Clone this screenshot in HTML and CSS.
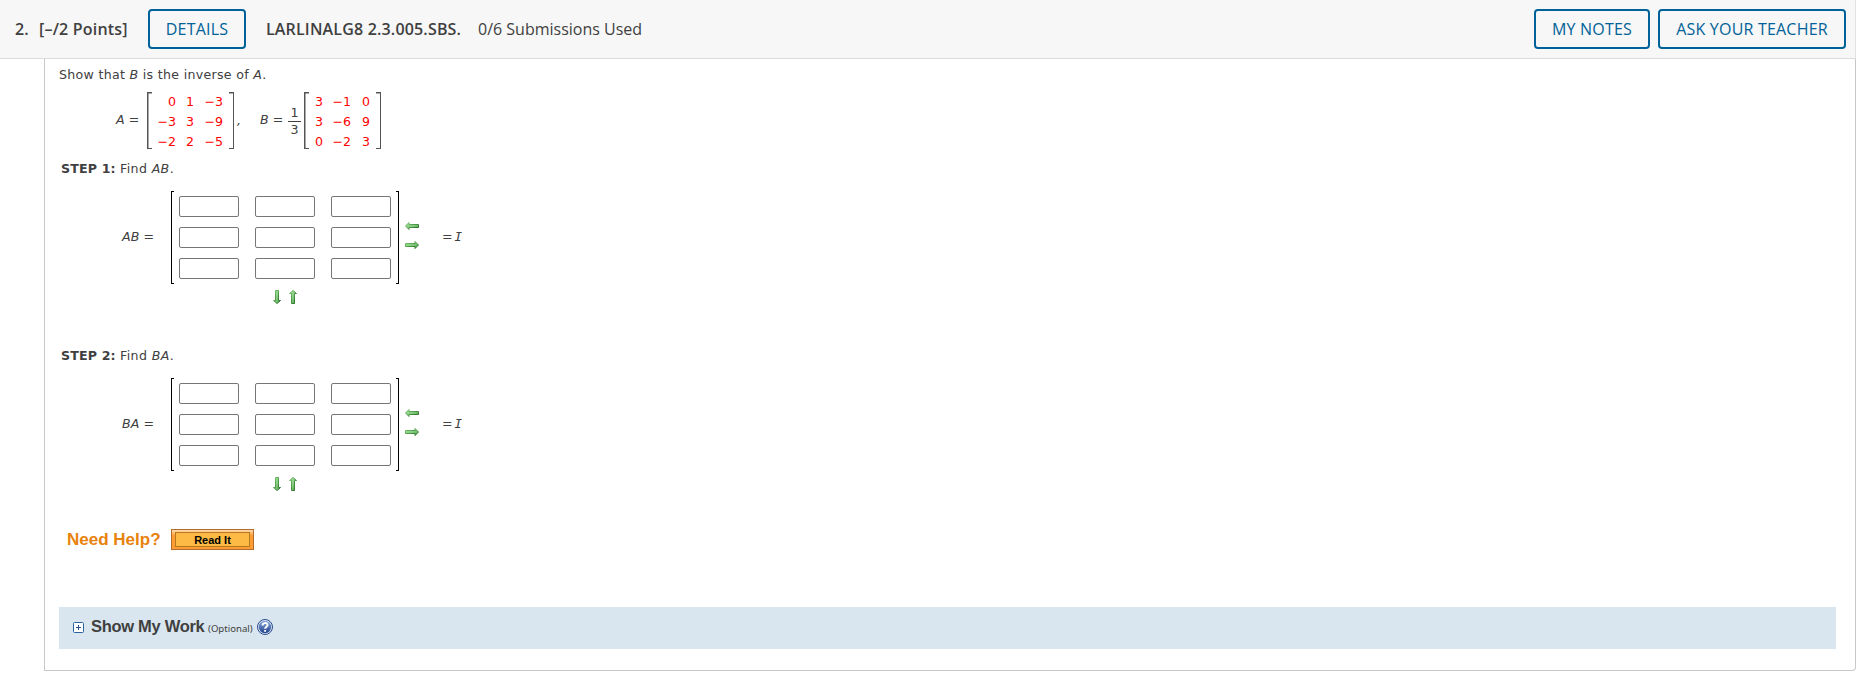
FILE: index.html
```
<!DOCTYPE html>
<html lang="en">
<head>
    <meta charset="UTF-8">
    <meta name="viewport" content="width=device-width, initial-scale=1.0">
    <title>Question 2</title>
    <link rel="stylesheet" href="styles.css">
</head>
<body>
  <!-- gradients shared by the matrix size arrows and the help icon -->
  <svg class="defs" width="0" height="0">
    <defs>
      <linearGradient id="green" x1="0" y1="0" x2="1" y2="1">
        <stop offset="0" stop-color="#a5e29b"/>
        <stop offset="0.5" stop-color="#86cc80"/>
        <stop offset="1" stop-color="#4a984a"/>
      </linearGradient>
      <linearGradient id="edge" x1="0" y1="0" x2="1" y2="1">
        <stop offset="0" stop-color="#7fca77"/>
        <stop offset="1" stop-color="#1c661c"/>
      </linearGradient>
      <linearGradient id="blue" x1="0" y1="0" x2="0" y2="1">
        <stop offset="0" stop-color="#8aa9dc"/>
        <stop offset="1" stop-color="#1f428c"/>
      </linearGradient>
      <symbol id="arrow-left" viewBox="0 0 14 8">
        <path d="M0.5 4 L4 0.5 V2.5 H13.5 V5.5 H4 V7.5 Z" fill="url(#green)" stroke="url(#edge)"/>
      </symbol>
      <symbol id="arrow-right" viewBox="0 0 14 8">
        <path d="M13.5 4 L10 0.5 V2.5 H0.5 V5.5 H10 V7.5 Z" fill="url(#green)" stroke="url(#edge)"/>
      </symbol>
      <symbol id="arrow-down" viewBox="0 0 8 14">
        <path d="M4 13.5 L0.5 10.5 H2.5 V0.5 H5.5 V10.5 H7.5 Z" fill="url(#green)" stroke="url(#edge)"/>
      </symbol>
      <symbol id="arrow-up" viewBox="0 0 8 14">
        <path d="M4 0.5 L0.5 3.5 H2.5 V13.5 H5.5 V3.5 H7.5 Z" fill="url(#green)" stroke="url(#edge)"/>
      </symbol>
    </defs>
  </svg>

  <header>
    <span class="number">2.</span>
    <span class="points">[–/2 Points]</span>
    <button class="btn btn-details">DETAILS</button>
    <span class="code">LARLINALG8 2.3.005.SBS.</span>
    <span class="submissions">0/6 Submissions Used</span>
    <div class="header-right">
      <button class="btn btn-notes">MY NOTES</button>
      <button class="btn btn-ask">ASK YOUR TEACHER</button>
    </div>
  </header>

  <main>
    <p class="prompt">Show that <i>B</i> is the inverse of <i>A</i>.</p>

    <div class="given">
      <span class="name-a"><i>A</i> =</span>
      <div class="matrix matrix-a">
        <span>0</span><span>1</span><span>−3</span>
        <span>−3</span><span>3</span><span>−9</span>
        <span>−2</span><span>2</span><span>−5</span>
      </div>
      <span class="comma"><i>,</i></span>
      <span class="name-b"><i>B</i> =</span>
      <span class="fraction"><span>1</span><span>3</span></span>
      <div class="matrix matrix-b">
        <span>3</span><span>−1</span><span>0</span>
        <span>3</span><span>−6</span><span>9</span>
        <span>0</span><span>−2</span><span>3</span>
      </div>
    </div>

    <section class="step">
      <p class="step-title"><b>STEP 1:</b> <span>Find <i>AB</i>.</span></p>
      <div class="answer">
        <span class="answer-name"><i>AB</i> =</span>
        <div class="answer-matrix">
          <input type="text"><input type="text"><input type="text">
          <input type="text"><input type="text"><input type="text">
          <input type="text"><input type="text"><input type="text">
        </div>
        <div class="cols">
          <svg width="14" height="8"><use href="#arrow-left"/></svg>
          <svg width="14" height="8"><use href="#arrow-right"/></svg>
        </div>
        <span class="identity">= <i>I</i></span>
      </div>
      <div class="rows">
        <svg width="8" height="14"><use href="#arrow-down"/></svg>
        <svg width="8" height="14"><use href="#arrow-up"/></svg>
      </div>
    </section>

    <section class="step">
      <p class="step-title"><b>STEP 2:</b> <span>Find <i>BA</i>.</span></p>
      <div class="answer">
        <span class="answer-name"><i>BA</i> =</span>
        <div class="answer-matrix">
          <input type="text"><input type="text"><input type="text">
          <input type="text"><input type="text"><input type="text">
          <input type="text"><input type="text"><input type="text">
        </div>
        <div class="cols">
          <svg width="14" height="8"><use href="#arrow-left"/></svg>
          <svg width="14" height="8"><use href="#arrow-right"/></svg>
        </div>
        <span class="identity">= <i>I</i></span>
      </div>
      <div class="rows">
        <svg width="8" height="14"><use href="#arrow-down"/></svg>
        <svg width="8" height="14"><use href="#arrow-up"/></svg>
      </div>
    </section>

    <div class="help">
      <span class="help-title">Need Help?</span>
      <button class="read-it"><span>Read It</span></button>
    </div>

    <div class="work">
      <svg class="plus" width="11" height="11" viewBox="0 0 11 11">
        <rect x="0.5" y="0.5" width="10" height="10" rx="1" fill="#fff" stroke="#2a62a0"/>
        <path d="M3 5.5 H8 M5.5 3 V8" stroke="#2a5590"/>
      </svg>
      <span class="work-title">Show My Work</span>
      <span class="optional">(Optional)</span>
      <svg class="question" width="16" height="16" viewBox="0 0 16 16">
        <circle cx="8" cy="8" r="7.5" fill="#dfe8f5" stroke="#2b4b8f"/>
        <circle cx="8" cy="8" r="6.2" fill="url(#blue)"/>
        <path d="M5.6 6.4 C5.6 3.3 10.6 3.4 10.6 6.1 C10.6 7.8 8.1 7.7 8.1 9.8 M8.1 10.9 V12.7" fill="none" stroke="#fff" stroke-width="1.9"/>
      </svg>
    </div>
  </main>
</body>
</html>
```
FILE: styles.css
```
*{
  margin: 0;
  padding: 0;
  box-sizing: border-box;
}

body{
  background: #fff;
  color: #404040;
  font-family: Verdana, "DejaVu Sans", sans-serif;
  font-size: 12.6px;
  line-height: 16px;
}

.defs{
  display: block;
}

header{
  display: flex;
  align-items: center;
  width: 1856px;
  height: 59px;
  padding: 0 9px 1px 15px;
  background: #f7f7f7;
  border-bottom: 1px solid #dcdcdc;
  border-right: 1px solid #e2e2e2;
  font-family: "Open Sans", sans-serif;
  font-size: 16px;
  white-space: nowrap;
}

.number, .points, .code{
  font-weight: 600;
  letter-spacing: 0.2px;
}

.number{
  width: 24px;
}

.points{
  width: 109px;
}

.code{
  width: 211px;
  letter-spacing: 0.17px;
}

.submissions{
  padding-left: 1px;
}

.header-right{
  display: flex;
  column-gap: 8px;
  margin-left: auto;
}

.btn{
  height: 40px;
  border: 2px solid #006298;
  border-radius: 4px;
  background: #f7f7f7;
  color: #006298;
  font-family: "Open Sans", sans-serif;
  font-size: 16px;
  font-weight: 500;
  letter-spacing: 0.2px;
  text-align: center;
}

.btn-details{
  width: 98px;
  margin-right: 20px;
}

.btn-notes{
  width: 116px;
}

.btn-ask{
  width: 188px;
}

main{
  width: 1812px;
  height: 612px;
  margin-left: 44px;
  padding: 8px 19px 0 14px;
  border: 1px solid #c8c8c8;
  border-top: none;
  border-radius: 0 0 4px 0;
}

.prompt{
  letter-spacing: 0.3px;
}

.given{
  display: flex;
  align-items: center;
  height: 57px;
  margin-top: 9px;
  padding-left: 56px;
}

.name-a{
  width: 32px;
}

/* brackets are the side borders plus short ticks at the four corners */
.matrix, .answer-matrix{
  --line: #555;
  --tick: 5px;
  --weight: 2px;
  display: grid;
  background:
    linear-gradient(var(--line), var(--line)) 0 0 / var(--tick) var(--weight) no-repeat,
    linear-gradient(var(--line), var(--line)) 0 100% / var(--tick) var(--weight) no-repeat,
    linear-gradient(var(--line), var(--line)) 100% 0 / var(--tick) var(--weight) no-repeat,
    linear-gradient(var(--line), var(--line)) 100% 100% / var(--tick) var(--weight) no-repeat,
    linear-gradient(var(--line), var(--line)) 0 0 / var(--weight) 100% no-repeat,
    linear-gradient(var(--line), var(--line)) 100% 0 / var(--weight) 100% no-repeat;
}

.matrix{
  --weight: 1.5px;
  height: 57px;
  grid-template-rows: repeat(3, 20px);
  align-content: center;
  padding-top: 2px;
  line-height: 20px;
  color: #f00;
  text-align: right;
}

.matrix-a{
  width: 87px;
  grid-template-columns: 29px 18px 29px;
}

.matrix-b{
  width: 77px;
  grid-template-columns: 19px 28px 19px;
}

.comma{
  width: 25px;
  padding-left: 3px;
}

.name-a, .name-b{
  padding: 0 0 2px 1px;
}

.name-b{
  width: 29px;
}

.fraction{
  display: flex;
  flex-direction: column;
  width: 13px;
  margin-right: 3px;
  padding-top: 1px;
  text-align: center;
}

.fraction span:first-child{
  border-bottom: 1px solid #404040;
}

.step{
  height: 187px;
}

.step-title{
  padding: 12px 0 14px 2px;
  letter-spacing: 0.35px;
}

.step-title b{
  letter-spacing: 0.15px;
}

.answer{
  display: flex;
  align-items: center;
  height: 93px;
}

.answer-name{
  width: 112px;
  padding: 0 0 2px 63px;
  letter-spacing: 0.1px;
}

.answer-matrix{
  --line: #000;
  --tick: 3px;
  --weight: 1px;
  width: 228px;
  height: 93px;
  grid-template-columns: repeat(3, 60px);
  grid-template-rows: repeat(3, 21px);
  gap: 10px 16px;
  padding: 5px 8px;
}

.answer-matrix input{
  width: 60px;
  height: 21px;
  border: 1px solid #767676;
  border-radius: 2px;
  background: #fff;
}

.cols{
  display: flex;
  flex-direction: column;
  row-gap: 11px;
  width: 37px;
  margin-left: 6px;
  padding-bottom: 4px;
}

.identity{
  padding-bottom: 2px;
}

/* the identity matrix symbol is a capital I with serifs */
.identity i{
  margin-left: -2px;
  font-family: Verdana, "DejaVu Sans Mono", monospace;
}

.rows{
  display: flex;
  column-gap: 8px;
  padding: 6px 0 0 214px;
}

.help{
  display: flex;
  align-items: center;
  height: 21px;
  margin: 6px 0 57px;
  padding-left: 8px;
  font-family: "Liberation Sans", sans-serif;
  font-weight: bold;
}

.help-title{
  width: 104px;
  color: #e8820c;
  font-size: 17px;
}

.read-it{
  width: 83px;
  height: 21px;
  padding: 2px 3px;
  border: 1px solid #b06c2c;
  background: linear-gradient(#ffdcae, #ff9c34 30%, #ff9c34);
}

.read-it span{
  display: block;
  height: 15px;
  border: 1px solid #b87820;
  background: #fdbb45;
  color: #000;
  font: bold 11px/14px "Liberation Sans", sans-serif;
}

.work{
  display: flex;
  align-items: center;
  height: 42px;
  padding: 0 0 2px 14px;
  background: #d9e6ef;
  font-family: "Liberation Sans", sans-serif;
}

.work-title{
  width: 117px;
  margin-left: 7px;
  padding-bottom: 2px;
  font-size: 16.5px;
  font-weight: bold;
  letter-spacing: -0.3px;
  white-space: nowrap;
}

.optional{
  width: 49px;
  padding-top: 4px;
  font: 9.6px/12px "Noto Sans", sans-serif;
  white-space: nowrap;
}
```
